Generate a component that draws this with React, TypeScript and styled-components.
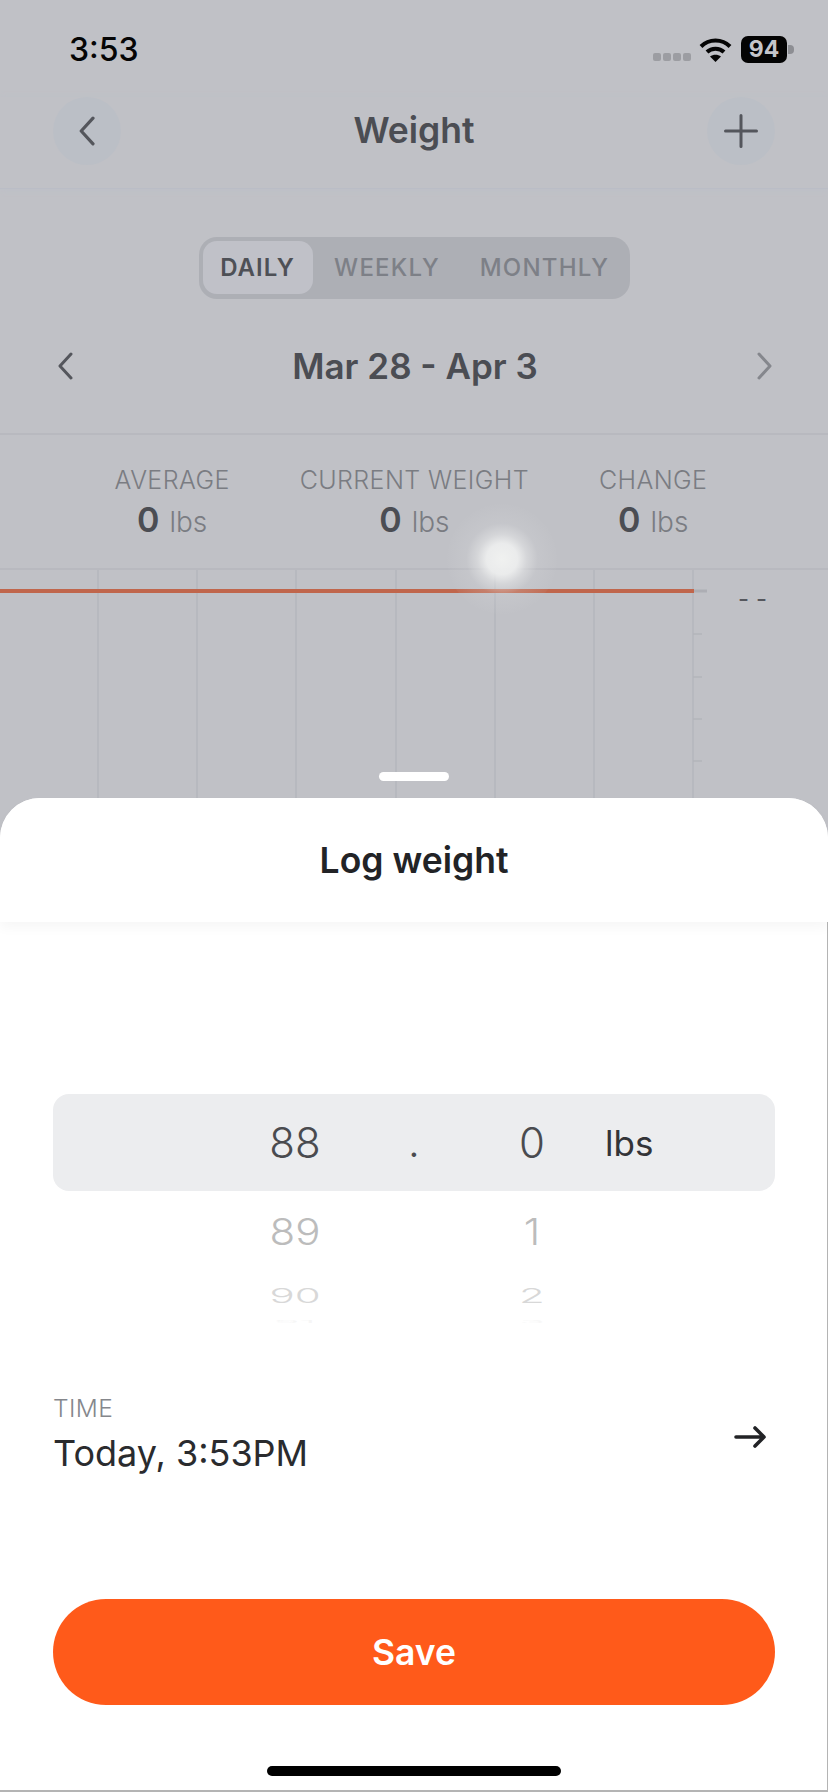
import styled, { createGlobalStyle } from 'styled-components'

const GlobalStyle = createGlobalStyle`
  html, body {
    margin: 0;
    padding: 0;
    background: #ffffff;
  }
  * {
    box-sizing: border-box;
  }
`

const Page = styled.div`
  position: relative;
  width: 828px;
  height: 1792px;
  overflow: hidden;
  display: flex;
  flex-direction: column;
  background: #c0c1c6;
  font-family: Inter, 'Liberation Sans', sans-serif;
`
const StatusBar = styled.div`
  height: 97px;
  display: flex;
  align-items: flex-start;
  justify-content: space-between;
  padding: 32px 34px 0 69px;
`
const Clock = styled.span`
  font-size: 32px;
  line-height: 36px;
  font-weight: 500;
  color: #050505;
`
const StatusIcons = styled.div`
  display: flex;
  align-items: center;
  margin-top: 4px;
`
const SignalDots = styled.div`
  display: flex;
  gap: 2px;
  margin: 14px 8px 0 0;
`
const SignalDot = styled.i`
  width: 8px;
  height: 8px;
  border-radius: 2px;
  background: #9c9da2;
`
const Battery = styled.div`
  width: 46px;
  height: 27px;
  margin-left: 9px;
  border-radius: 7px;
  background: #040404;
  color: #c4c5ca;
  font-size: 23px;
  font-weight: 700;
  line-height: 27px;
  text-align: center;
`
const BatteryNub = styled.i`
  width: 6px;
  height: 9px;
  margin-left: 1px;
  border-radius: 0 4px 4px 0;
  background: #8d8e93;
`
const NavBar = styled.header`
  height: 92px;
  padding: 0 53px 24px 53px;
  display: flex;
  align-items: center;
  justify-content: space-between;
  border-bottom: 1px solid #babdc6;
  box-shadow: 0 1px 6px #bcc0c8;
`
const RoundButton = styled.div`
  width: 68px;
  height: 68px;
  border-radius: 50%;
  display: flex;
  align-items: center;
  justify-content: center;
  background: #bbbfc6;
`
const NavTitle = styled.h1`
  margin: 0;
  font-size: 35.5px;
  line-height: 40px;
  font-weight: 600;
  color: #4b4d53;
`
const Segments = styled.div`
  align-self: center;
  width: 431px;
  height: 62px;
  margin-top: 48px;
  padding: 4px;
  display: flex;
  border-radius: 18px;
  background: #adafb5;
`
const Segment = styled.div<{ $active?: boolean; $width: number }>`
  flex: none;
  width: ${(p) => p.$width}px;
  height: 53px;
  display: flex;
  align-items: center;
  justify-content: center;
  border-radius: 14px;
  background: ${(p) => (p.$active ? '#c0c1c8' : 'transparent')};
  color: ${(p) => (p.$active ? '#4e5056' : '#7d8087')};
  font-size: 24px;
  font-weight: ${(p) => (p.$active ? 600 : 500)};
  letter-spacing: ${(p) => (p.$active ? 1 : 1.2)}px;
`
const DateRow = styled.div`
  height: 136px;
  padding: 0 55px 0 57px;
  display: flex;
  align-items: center;
  justify-content: space-between;
  border-bottom: 2px solid #b8b9bf;
`
const DateLabel = styled.div`
  font-size: 35px;
  line-height: 42px;
  font-weight: 600;
  color: #4b4d53;
`
const Stats = styled.section`
  height: 135px;
  padding: 0 6px 0 0;
  display: flex;
  justify-content: center;
  gap: 70px;
  border-bottom: 2px solid #b8b9bf;
`
const Stat = styled.div`
  padding-top: 30px;
  display: flex;
  flex-direction: column;
  align-items: center;
`
const StatLabel = styled.div`
  font-size: 25px;
  line-height: 30px;
  font-weight: 300;
  color: #7a7c82;
  letter-spacing: 0.4px;
  white-space: nowrap;
`
const StatValue = styled.div`
  margin-top: 3px;
  display: flex;
  align-items: baseline;
  gap: 10px;
  font-size: 34px;
  line-height: 44px;
  font-weight: 600;
  color: #4b4d53;
`
const StatUnit = styled.span`
  font-size: 28px;
  font-weight: 300;
  color: #7a7c82;
`
const Glow = styled.div`
  position: absolute;
  left: 447px;
  top: 504px;
  width: 110px;
  height: 110px;
  border-radius: 50%;
  background: radial-gradient(
    circle,
    rgba(240, 241, 240, 1) 0%,
    rgba(238, 239, 239, 0.92) 20%,
    rgba(230, 231, 232, 0.55) 32%,
    rgba(215, 216, 219, 0.22) 46%,
    rgba(200, 201, 205, 0.07) 70%,
    rgba(192, 193, 198, 0) 100%
  );
`
const Chart = styled.div`
  position: relative;
  height: 228px;
`
const ChartLines = styled.svg`
  display: block;
`
const ChartEmpty = styled.div`
  position: absolute;
  top: 17px;
  left: 738px;
  font-size: 24px;
  line-height: 24px;
  letter-spacing: 7px;
  color: #55575d;
`
const Handle = styled.div`
  position: absolute;
  left: 379px;
  bottom: 17px;
  width: 70px;
  height: 9px;
  border-radius: 5px;
  background: #ffffff;
`
const Sheet = styled.section`
  flex: 1;
  display: flex;
  flex-direction: column;
  border-radius: 40px 40px 0 0;
  background: #ffffff;
`
const SheetHeader = styled.header`
  position: relative;
  height: 124px;
  padding-top: 1px;
  display: flex;
  align-items: center;
  justify-content: center;
  border-radius: 40px 40px 0 0;
  background: #ffffff;
  box-shadow: 0 6px 12px rgba(0, 0, 0, 0.035);
`
const SheetTitle = styled.h2`
  margin: 0;
  font-size: 35.5px;
  line-height: 40px;
  font-weight: 600;
  color: #222326;
`
const SheetBody = styled.div`
  flex: 1;
  padding: 172px 52px 0 53px;
  display: flex;
  flex-direction: column;
  border-right: 1px solid #b4b4b4;
  border-bottom: 2px solid #b4b4b4;
`
const WheelRow = styled.div<{ $selected?: boolean; $height: number; $color: string; $squash: number }>`
  height: ${(p) => p.$height}px;
  padding-left: 189px;
  display: grid;
  grid-template-columns: 106px 131px 106px 1fr;
  align-items: center;
  justify-items: center;
  border-radius: 16px;
  background: ${(p) => (p.$selected ? '#ecedef' : 'transparent')};
  color: ${(p) => p.$color};
  font-size: 42px;
  line-height: ${(p) => Math.min(p.$height, 48)}px;
  font-weight: 300;
  & > span {
    transform: scaleY(${(p) => p.$squash});
  }
`
const WheelDot = styled.span`
  padding: 4px 0 0 1px;
  font-size: 34px;
  font-weight: 400;
`
const WheelUnit = styled.span`
  justify-self: start;
  margin-left: 20px;
  font-size: 35px;
  font-weight: 400;
  color: #333438;
`
const TimeRow = styled.div`
  margin-top: 68px;
  padding-right: 9px;
  display: flex;
  align-items: center;
  justify-content: space-between;
`
const TimeLabel = styled.div`
  font-size: 24.5px;
  line-height: 30px;
  font-weight: 300;
  color: #85878c;
  letter-spacing: 0.4px;
`
const TimeValue = styled.div`
  margin-top: 8px;
  font-size: 36px;
  line-height: 44px;
  font-weight: 400;
  color: #2a2b2e;
`
const ArrowWrap = styled.div`
  margin-top: 6px;
  line-height: 0;
`
const SaveButton = styled.button`
  width: 722px;
  height: 106px;
  margin-top: 124px;
  border: 0;
  border-radius: 53px;
  background: #ff5a1a;
  color: #ffffff;
  font-family: inherit;
  font-size: 35.5px;
  font-weight: 600;
`
const HomeBar = styled.div`
  align-self: center;
  width: 294px;
  height: 10px;
  margin-top: 61px;
  border-radius: 5px;
  background: #000000;
`

function Chevron({ dir, size, color }: { dir: 'left' | 'right'; size: number; color: string }) {
  const points = dir === 'left' ? '14,2 3,14 14,26' : '3,2 14,14 3,26'
  return (
    <svg width={(size * 17) / 28} height={size} viewBox="0 0 17 28" fill="none">
      <polyline points={points} stroke={color} strokeWidth="3" strokeLinecap="round" strokeLinejoin="round" />
    </svg>
  )
}

function Wifi() {
  return (
    <svg width="33" height="25" viewBox="0 0 33 25" fill="none">
      <path d="M2 9.5C10 1.5 23 1.5 31 9.5" stroke="#050505" strokeWidth="4" />
      <path d="M8 15C12.5 10.6 20.5 10.6 25 15" stroke="#050505" strokeWidth="4" />
      <path d="M11 19.6C14.2 17 18.8 17 22 19.6L16.5 25Z" fill="#050505" />
    </svg>
  )
}

const gridLines = [98, 197, 296, 396, 495, 594, 693]
const ticks = [64, 107, 149, 191]

function WeightChart() {
  return (
    <ChartLines width="828" height="228" viewBox="0 0 828 228">
      {gridLines.map((x) => (
        <line key={x} x1={x} y1="0" x2={x} y2="228" stroke="#b5b6bc" strokeWidth="1.5" />
      ))}
      {ticks.map((y) => (
        <line key={y} x1="693" y1={y} x2="702" y2={y} stroke="#b3b4ba" strokeWidth="1.5" />
      ))}
      <line x1="693" y1="21" x2="707" y2="21" stroke="#adaeb4" strokeWidth="3" />
      <rect x="0" y="19" width="694" height="4" fill="#c0664c" />
    </ChartLines>
  )
}

const stats = [
  { label: 'AVERAGE', value: '0' },
  { label: 'CURRENT WEIGHT', value: '0' },
  { label: 'CHANGE', value: '0' },
]

const wheelRows = [
  { left: '89', right: '1', height: 82, color: '#bcbcbc', squash: 0.86 },
  { left: '90', right: '2', height: 46, color: '#d8d8d8', squash: 0.48 },
  { left: '91', right: '3', height: 6, color: '#f6f6f6', squash: 0.08 },
]

export default function App() {
  return (
    <Page>
      <GlobalStyle />
      <StatusBar>
        <Clock>3:53</Clock>
        <StatusIcons>
          <SignalDots>
            <SignalDot />
            <SignalDot />
            <SignalDot />
            <SignalDot />
          </SignalDots>
          <Wifi />
          <Battery>94</Battery>
          <BatteryNub />
        </StatusIcons>
      </StatusBar>

      <NavBar>
        <RoundButton>
          <Chevron dir="left" size={30} color="#54565c" />
        </RoundButton>
        <NavTitle>Weight</NavTitle>
        <RoundButton>
          <svg width="34" height="34" viewBox="0 0 34 34" fill="none">
            <path d="M17 1.5V32.5M1.5 17H32.5" stroke="#54565c" strokeWidth="3" strokeLinecap="round" />
          </svg>
        </RoundButton>
      </NavBar>

      <Segments>
        <Segment $active $width={110}>DAILY</Segment>
        <Segment $width={149}>WEEKLY</Segment>
        <Segment $width={166}>MONTHLY</Segment>
      </Segments>

      <DateRow>
        <Chevron dir="left" size={28} color="#54565c" />
        <DateLabel>Mar 28 - Apr 3</DateLabel>
        <Chevron dir="right" size={28} color="#85878d" />
      </DateRow>

      <Stats>
        {stats.map((stat) => (
          <Stat key={stat.label}>
            <StatLabel>{stat.label}</StatLabel>
            <StatValue>
              {stat.value}
              <StatUnit>lbs</StatUnit>
            </StatValue>
          </Stat>
        ))}
      </Stats>

      <Chart>
        <WeightChart />
        <ChartEmpty>--</ChartEmpty>
        <Handle />
      </Chart>
      <Glow />

      <Sheet>
        <SheetHeader>
          <SheetTitle>Log weight</SheetTitle>
        </SheetHeader>
        <SheetBody>
          <WheelRow $selected $height={97} $color="#4a4b4f" $squash={1}>
            <span>88</span>
            <WheelDot>.</WheelDot>
            <span>0</span>
            <WheelUnit>lbs</WheelUnit>
          </WheelRow>
          {wheelRows.map((row) => (
            <WheelRow key={row.left} $height={row.height} $color={row.color} $squash={row.squash}>
              <span>{row.left}</span>
              <span />
              <span>{row.right}</span>
            </WheelRow>
          ))}
          <TimeRow>
            <div>
              <TimeLabel>TIME</TimeLabel>
              <TimeValue>Today, 3:53PM</TimeValue>
            </div>
            <ArrowWrap>
              <svg width="32" height="24" viewBox="0 0 32 24" fill="none">
                <path d="M2 12H30M21 3L30 12L21 21" stroke="#222326" strokeWidth="3.6" strokeLinecap="round" strokeLinejoin="round" />
              </svg>
            </ArrowWrap>
          </TimeRow>
          <SaveButton>Save</SaveButton>
          <HomeBar />
        </SheetBody>
      </Sheet>
    </Page>
  )
}
